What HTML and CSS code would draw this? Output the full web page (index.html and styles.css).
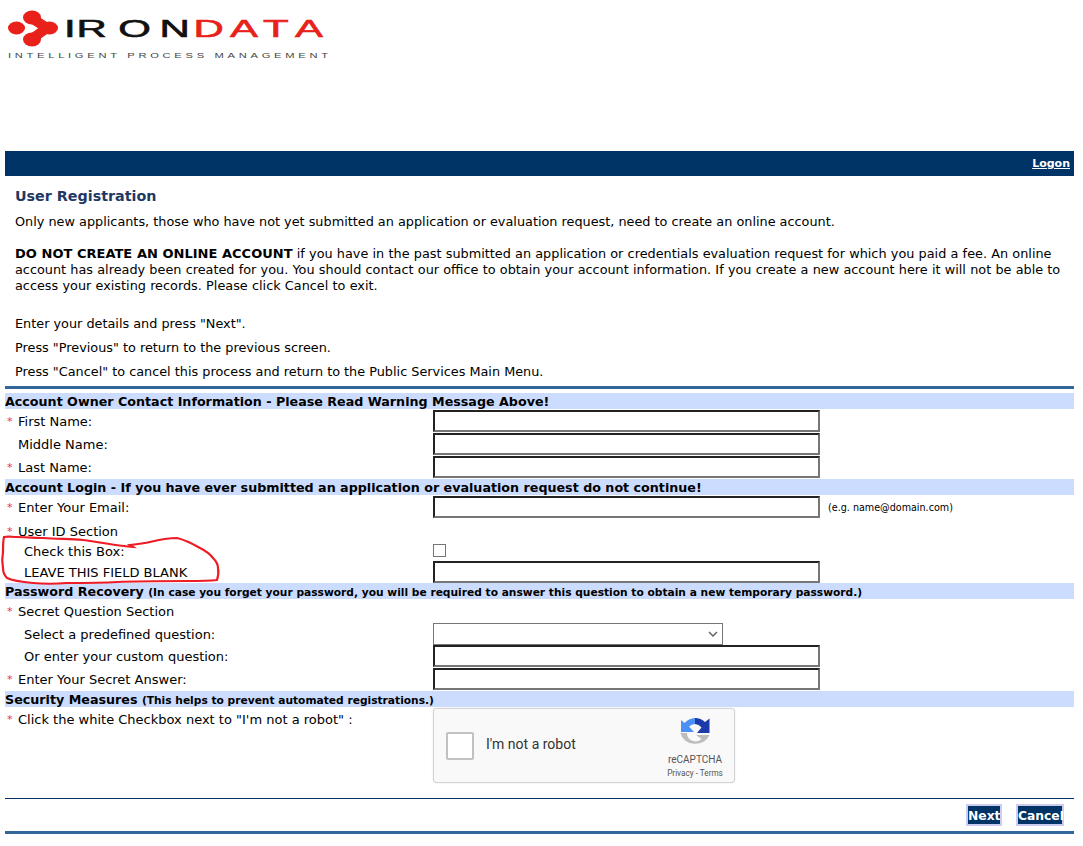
FILE: index.html
```html
<!DOCTYPE html>
<html lang="en">
<head>
  <meta charset="UTF-8">
  <meta name="viewport" content="width=device-width, initial-scale=1">
  <title>User Registration</title>
  <link rel="stylesheet" href="styles.css">
</head>
<body>
  <!-- Logo -->
  <header class="logo-area">
    <svg class="logo" width="340" height="70" viewBox="0 0 340 70">
      <g fill="#e8211a">
        <ellipse cx="16.500" cy="28" rx="8.500" ry="6.500"/>
        <ellipse cx="32" cy="17.500" rx="9" ry="7"/>
        <ellipse cx="49.500" cy="28" rx="8.500" ry="6.500"/>
        <ellipse cx="32" cy="39.500" rx="9" ry="7"/>
      </g>
      <path d="M33 19 L47 28 L33 38" fill="none" stroke="#e8211a" stroke-width="10" stroke-linejoin="round"/>
      <g transform="scale(1.750 1)">
        <text class="logo-word logo-black" x="36.600 43.700 67.600 91.100" y="37">IRON</text>
        <text class="logo-word logo-red" x="110.600 131.400 150.300 168.600" y="37">DATA</text>
      </g>
      <g transform="scale(1.600 1)">
        <text class="logo-tag" x="5" y="58" textLength="200">INTELLIGENT PROCESS MANAGEMENT</text>
      </g>
    </svg>
  </header>

  <div class="top-bar"><a href="#">Logon</a></div>

  <!-- Intro text -->
  <div class="intro">
    <h1>User Registration</h1>
    <p class="first">Only new applicants, those who have not yet submitted an application or evaluation request, need to create an online account.</p>
    <p class="warning"><strong>DO NOT CREATE AN ONLINE ACCOUNT</strong> if you have in the past submitted an application or credentials evaluation request for which you paid a fee. An online account has already been created for you. You should contact our office to obtain your account information. If you create a new account here it will not be able to access your existing records. Please click Cancel to exit.</p>
    <p class="step step-first">Enter your details and press "Next".</p>
    <p class="step">Press "Previous" to return to the previous screen.</p>
    <p class="step">Press "Cancel" to cancel this process and return to the Public Services Main Menu.</p>
  </div>

  <hr class="rule-thick">

  <form class="reg-form">
    <div class="section">Account Owner Contact Information - Please Read Warning Message Above!</div>
    <div class="row"><label class="req">First Name:</label><input type="text"></div>
    <div class="row"><label class="plain">Middle Name:</label><input type="text"></div>
    <div class="row"><label class="req">Last Name:</label><input type="text"></div>

    <div class="section gap">Account Login - If you have ever submitted an application or evaluation request do not continue!</div>
    <div class="row">
      <label class="req">Enter Your Email:</label>
      <div class="field-hint"><input type="text"><span class="hint">(e.g. name@domain.com)</span></div>
    </div>
    <div class="row row-head"><label class="req">User ID Section</label></div>
    <div class="row row-check"><label class="sub">Check this Box:</label><input type="checkbox"></div>
    <div class="row"><label class="sub">LEAVE THIS FIELD BLANK</label><input type="text"></div>

    <div class="section">Password Recovery <small>(In case you forget your password, you will be required to answer this question to obtain a new temporary password.)</small></div>
    <div class="row row-head-tall"><label class="req">Secret Question Section</label></div>
    <div class="row row-tight"><label class="sub">Select a predefined question:</label><select><option></option></select></div>
    <div class="row row-tight"><label class="sub">Or enter your custom question:</label><input type="text"></div>
    <div class="row"><label class="req">Enter Your Secret Answer:</label><input type="text"></div>

    <div class="section gap">Security Measures <small>(This helps to prevent automated registrations.)</small></div>
    <div class="row row-captcha">
      <label class="req">Click the white Checkbox next to "I'm not a robot" :</label>
      <div class="captcha">
        <span class="captcha-box"></span>
        <span class="captcha-text">I'm not a robot</span>
        <div class="captcha-brand">
          <svg width="30" height="30" viewBox="0 0 30 30">
            <path d="M15 0 L15 6 A9 9 0 0 0 9 8.500 L14 14 L1 14 L1 2 L4.500 5 A15 15 0 0 1 15 0 Z" fill="#4a90f5"/>
            <path d="M15 0 A15 15 0 0 1 25 4 L29.500 0.500 L29.500 15 L17 15 L21.500 9.500 A9 9 0 0 0 15 6 Z" fill="#1c3aa9"/>
            <path d="M0.500 15 L7 15 A8.500 8.500 0 0 0 21.500 21 L16 17 L29.500 17 A15 13 0 0 1 0.500 15 Z" fill="#bdbdbd"/>
          </svg>
          <div class="captcha-name">reCAPTCHA</div>
          <div class="captcha-links">Privacy - Terms</div>
        </div>
      </div>
    </div>

    <hr class="rule-thin">
    <div class="buttons">
      <button type="button">Next</button>
      <button type="button">Cancel</button>
    </div>
    <hr class="rule-thick rule-end">
  </form>

  <!-- Red pen mark drawn over the screenshot -->
  <svg class="scribble" width="230" height="60" viewBox="0 530 230 60">
    <path d="M4 537 C8 536 12 537 17 537 C28 537 35 538 43 538 C58 539 70 539 83 540 C100 542 118 546 133 547 L130 545 C140 544 146 543 150 542 C158 540 168 538 177 538 C186 540 193 544 200 548 C206 551 210 554 213 558 C216 561 218 564 218 568 C219 573 218 577 217 580 C208 581 198 581 187 581 C165 581 140 581 117 582 C100 583 84 583 67 583 C55 584 44 584 33 583 C22 582 13 581 7 578 C4 575 3 572 3 568 C2 562 2 557 3 552 C3 546 3 541 4 537 Z" fill="none" stroke="#ee1c25" stroke-width="2.200"/>
  </svg>
</body>
</html>
```

FILE: styles.css
```css
/* Reset y estilos basicos */
* {
  box-sizing: border-box;
}
body {
  margin: 0 9px 0 5px;
  font-family: "DejaVu Sans", Verdana, sans-serif;
  font-size: 12.830px;
  line-height: 16px;
  color: #000;
  background: #fff;
}
.logo-area {
  height: 151px;
  margin-left: -5px;
}
.logo {
  display: block;
}
.logo-word {
  font-family: "Liberation Sans", Arial, sans-serif;
  font-size: 24px;
  stroke-width: 0.600;
}
.logo-black {
  fill: #111;
  stroke: #111;
}
.logo-red {
  fill: #e8211a;
  stroke: #e8211a;
}
.logo-tag {
  font-family: "Liberation Sans", Arial, sans-serif;
  font-size: 7px;
  fill: #444;
}
.top-bar {
  height: 25px;
  background: #003366;
  display: flex;
  justify-content: flex-end;
  align-items: center;
  padding-right: 4px;
}
.top-bar a {
  color: #fff;
  font-size: 11px;
  font-weight: bold;
}
.intro {
  padding: 12px 10px 0;
}
.intro h1 {
  margin: 0;
  font-size: 14.300px;
  line-height: 16px;
  color: #1f3864;
}
.intro p {
  margin: 0;
}
.intro .first {
  margin-top: 10px;
}
.intro .warning {
  margin-top: 16px;
  word-spacing: 0.150px;
}
.intro .warning strong {
  font-size: 13px;
}
.intro .step {
  margin-top: 8px;
}
.intro .step-first {
  margin-top: 22px;
}
.rule-thick {
  height: 3px;
  margin: 6px 0 0;
  border: 0;
  background: #336699;
}
.rule-thin {
  height: 1px;
  margin: 15px 0 0;
  border: 0;
  background: #003366;
}
.rule-end {
  margin-top: 5px;
}
.reg-form {
  margin-top: 4px;
}
.section {
  height: 16px;
  background: #cbdcff;
  font-size: 12.700px;
  font-weight: bold;
  line-height: 18px;
  white-space: nowrap;
}
.section small {
  font-size: 10.660px;
}
.section.gap {
  margin-top: 1px;
}
.row {
  display: grid;
  grid-template-columns: 428px 1fr;
  height: 23px;
  align-items: end;
  font-size: 13px;
}
.row label {
  align-self: center;
  padding-top: 2px;
}
.row input[type="text"] {
  display: block;
  width: 387px;
  height: 22px;
  padding: 1px 2px;
  border: 2px solid;
  border-color: #222 #767676 #767676 #222;
  background: #fff;
}
.row-head {
  height: 26px;
}
.row-head-tall {
  height: 24px;
}
.row-check {
  height: 16px;
  align-items: start;
}
.row-check label {
  padding-top: 0;
}
.row-check input {
  appearance: none;
  margin: 0;
  width: 13px;
  height: 13px;
  border: 1px solid #767676;
  background: #fff;
}
.row-tight {
  height: 22px;
}
.row select {
  appearance: none;
  display: block;
  width: 290px;
  height: 22px;
  border: 1px solid #767676;
  background: #fff url("data:image/svg+xml,%3Csvg xmlns='http://www.w3.org/2000/svg' width='10' height='6'%3E%3Cpath d='M1 1l4 4 4-4' fill='none' stroke='%23666' stroke-width='1.500'/%3E%3C/svg%3E") no-repeat right 4px center;
}
.row-captcha {
  height: 76px;
  align-items: start;
}
.row-captcha label {
  align-self: start;
  padding-top: 5px;
}
label.req,
label.plain {
  padding-left: 13px;
  position: relative;
}
label.sub {
  padding-left: 19px;
}
label.req::before {
  content: "*";
  position: absolute;
  left: 2px;
  top: 2px;
  color: #ee3333;
  font-size: 11px;
}
.row-captcha label.req::before {
  top: 5px;
}
.field-hint {
  display: flex;
  align-items: center;
}
.hint {
  margin-left: 8px;
  font-size: 9.600px;
  padding-top: 2px;
}
.captcha {
  width: 302px;
  height: 75px;
  margin-top: 1px;
  padding: 0 10px 0 12px;
  display: flex;
  align-items: center;
  background: #f9f9f9;
  border: 1px solid #d3d3d3;
  border-radius: 3px;
  box-shadow: 0 0 3px rgba(0,0,0,0.08);
  font-family: Roboto, "Liberation Sans", sans-serif;
}
.captcha-box {
  width: 28px;
  height: 28px;
  background: #fff;
  border: 2px solid #c1c1c1;
  border-radius: 2px;
}
.captcha-text {
  margin: 0 0 3px 12px;
  font-size: 14px;
  color: #333;
}
.captcha-brand {
  align-self: flex-start;
  margin-left: auto;
  width: 58px;
  text-align: center;
  color: #555;
  padding-top: 9px;
}
.captcha-brand svg {
  display: block;
  margin: 0 auto;
}
.captcha-name {
  font-size: 10px;
  line-height: 12px;
  margin-top: 6px;
}
.captcha-links {
  font-size: 8.200px;
  line-height: 10px;
  margin-top: 2px;
  white-space: nowrap;
}
.buttons {
  display: flex;
  justify-content: flex-end;
  gap: 14px;
  margin-top: 5px;
  padding-right: 10px;
}
.buttons button {
  height: 22px;
  padding: 2px 0 0;
  border: 2px solid #ccccee;
  background: #003366;
  color: #fff;
  font-family: "DejaVu Sans", Verdana, sans-serif;
  font-size: 12.300px;
  font-weight: bold;
  line-height: 16px;
  width: 36px;
}
.buttons button:last-child {
  width: 48px;
}
.scribble {
  position: absolute;
  left: 0;
  top: 530px;
  pointer-events: none;
}
```
